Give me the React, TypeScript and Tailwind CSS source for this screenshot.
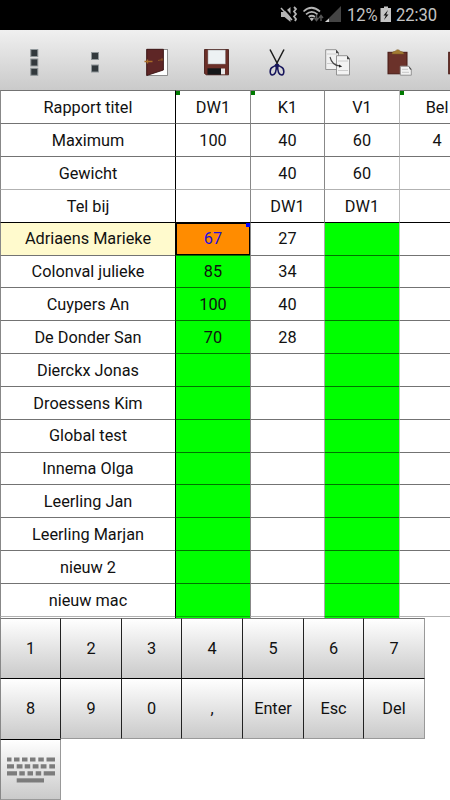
import clsx from 'clsx'
import { ReactNode } from 'react'

type TRow = {
  label: string
  values: string[]
}

const headerRows: TRow[] = [
  { label: 'Rapport titel', values: ['DW1', 'K1', 'V1', 'Bel'] },
  { label: 'Maximum', values: ['100', '40', '60', '4'] },
  { label: 'Gewicht', values: ['', '40', '60', ''] },
  { label: 'Tel bij', values: ['', 'DW1', 'DW1', ''] },
]

const studentRows: TRow[] = [
  { label: 'Adriaens Marieke', values: ['67', '27', '', ''] },
  { label: 'Colonval julieke', values: ['85', '34', '', ''] },
  { label: 'Cuypers An', values: ['100', '40', '', ''] },
  { label: 'De Donder San', values: ['70', '28', '', ''] },
  { label: 'Dierckx Jonas', values: ['', '', '', ''] },
  { label: 'Droessens Kim', values: ['', '', '', ''] },
  { label: 'Global test', values: ['', '', '', ''] },
  { label: 'Innema Olga', values: ['', '', '', ''] },
  { label: 'Leerling Jan', values: ['', '', '', ''] },
  { label: 'Leerling Marjan', values: ['', '', '', ''] },
  { label: 'nieuw 2', values: ['', '', '', ''] },
  { label: 'nieuw mac', values: ['', '', '', ''] },
  { label: '', values: ['', '', '', ''] },
]

const keys = ['1', '2', '3', '4', '5', '6', '7', '8', '9', '0', ',', 'Enter', 'Esc', 'Del']

function StatusBar() {
  return (
    <div className="flex h-[30px] shrink-0 items-center bg-black text-[#c4c4c4]">
      <svg className="ml-[270px] h-[30px] w-[75px] shrink-0" viewBox="270 0 75 30">
        {/* muted, vibrating */}
        <path d="M281 12h3.500l6-5v15l-6-5H281z" fill="#b4b4b4" />
        <path d="M282.500 6.500l10 11" stroke="#000" strokeWidth="2" />
        <path d="M281 8l11 12" stroke="#b4b4b4" strokeWidth="1.500" />
        <path d="M294 7l2 2-2 2.500 2 2.500-2 2.500 2 2.500-1 2" fill="none" stroke="#b4b4b4" strokeWidth="1.800" />
        {/* wifi */}
        <g fill="none" stroke="#b4b4b4" strokeWidth="1.700">
          <path d="M303.500 11.500q8-7.500 16.500 0" />
          <path d="M306 14.300q5.700-5 11.500 0" />
          <path d="M308.700 17q3-2.500 6.200 0" />
        </g>
        <path d="M309.500 18.500q2.300-1.500 4.500 0l-2.200 2.700z" fill="#b4b4b4" />
        <path d="M316.500 15v5M314.500 18l2 2.500 2-2.500M321 21v-5M319 18l2-2.500 2 2.500" fill="none" stroke="#555" strokeWidth="1.500" />
        {/* signal */}
        <path d="M341 6v16h-16z" fill="#444" />
        <path d="M329 18.500v3.500h-4z" fill="#d0d0d0" />
      </svg>
      <span className="ml-[2px] w-[30px] origin-left scale-x-[0.87] text-[19px] leading-[30px]">12%</span>
      <svg className="ml-[3px] h-[30px] w-[12px] shrink-0" viewBox="380 0 12 30">
        <path d="M384 6.500h4v1.500h3V22h-10.500V8h3.500z" fill="#c4c4c4" />
        <path d="M388 10l-4.500 5.500h2.300l-1.800 4.500 4.500-5.500h-2.300z" fill="#111" />
      </svg>
      <span className="ml-[4px] w-[42px] origin-left scale-x-[0.87] text-[19px] leading-[30px]">22:30</span>
    </div>
  )
}

function ToolIcon(props: Readonly<{ viewBox: string; children: ReactNode }>) {
  return (
    <svg className="h-[60px] w-[61px] shrink-0" viewBox={props.viewBox}>
      {props.children}
    </svg>
  )
}

function Toolbar() {
  return (
    <div className="flex h-[60px] shrink-0 overflow-hidden bg-linear-to-b from-[#f0f0f0] to-[#cacaca]">
      <ToolIcon viewBox="0 30 61 60">
        <g fill="#32393d" stroke="#8f9699" strokeWidth="1">
          <rect x="30.800" y="49.500" width="7" height="7" />
          <rect x="30.800" y="59" width="7" height="7" />
          <rect x="30.800" y="68.300" width="7" height="7" />
        </g>
      </ToolIcon>
      <ToolIcon viewBox="61 30 61 60">
        <g fill="#32393d" stroke="#8f9699" strokeWidth="1">
          <rect x="91.500" y="52.500" width="7" height="7" />
          <rect x="91.500" y="65" width="7" height="7" />
        </g>
      </ToolIcon>
      {/* door */}
      <ToolIcon viewBox="122 30 61 60">
        <rect x="147" y="49.500" width="20.500" height="26" fill="#fff" stroke="#777" strokeWidth=".8" />
        <path d="M146.700 49.300h16.700V70l-16.700 5.500z" fill="#5e2626" stroke="#381111" strokeWidth=".9" />
        <path d="M144.500 61.500h8M147.500 59.500v4" stroke="#a96c28" strokeWidth="1.300" />
        <path d="M158 60.500l4.500-1M162 58v3" stroke="#8b5524" strokeWidth="1" />
      </ToolIcon>
      {/* floppy */}
      <ToolIcon viewBox="183 30 61 60">
        <path d="M204.500 49.500h24v25.300H206l-1.500-1.500z" fill="#6b2f28" stroke="#4b201c" strokeWidth=".9" />
        <rect x="208" y="50" width="17.300" height="14" fill="#edf1f3" stroke="#999" strokeWidth=".5" />
        <rect x="207.500" y="68.300" width="13.500" height="6.300" fill="#151719" />
        <rect x="221" y="68.500" width="4" height="5.800" fill="#e9e9e9" />
      </ToolIcon>
      {/* scissors */}
      <ToolIcon viewBox="244 30 61 60">
        <path d="M270 49.500l7 13.500 1 4M284 49.500L277 63l-1 4" fill="none" stroke="#1b1b1b" strokeWidth="1.500" />
        <g fill="none" stroke="#17155c" strokeWidth="1.600">
          <path d="M276.300 64.500q.5 10-4 10.500c-3 0-2.800-7 .5-8 2-.5 3-1.500 3.500-3" />
          <path d="M277.700 64.500q-.5 10 4 10.500c3 0 2.800-7-.5-8-2-.5-3-1.500-3.500-3" />
        </g>
      </ToolIcon>
      {/* copy */}
      <ToolIcon viewBox="305 30 61 60">
        <path d="M325.700 49.700H336l2.500 3.300v16.500h-12.800z" fill="#f1f1f1" stroke="#8a8a8a" strokeWidth=".9" />
        <path d="M336 49.500v3.800h3z" fill="#444" />
        <path d="M327 54h10M327 63.500h9" stroke="#ccc" strokeWidth="1" />
        <path d="M336.500 55.700H347l2.500 3.300v16h-13z" fill="#f3f3f3" stroke="#8a8a8a" strokeWidth=".9" />
        <path d="M347 55.500v3.800h3z" fill="#444" />
        <path d="M338 61h10M338 70.500h10" stroke="#ccc" strokeWidth="1" />
        <path d="M330 57q2 8.500 10 9" fill="none" stroke="#444" strokeWidth="1.100" />
        <path d="M339 64.500l3.200 2-3.200 1z" fill="#222" />
      </ToolIcon>
      {/* paste */}
      <ToolIcon viewBox="366 30 61 60">
        <rect x="388" y="52.300" width="19" height="21.500" fill="#6b322a" stroke="#471a14" strokeWidth="1" />
        <path d="M392 54q0-2.500 3-2.700 2.800-3.300 5.500 0 3 .2 3.500 2.700z" fill="#a37b32" stroke="#7a5b24" strokeWidth=".5" />
        <path d="M400.300 66.200h8.500l2.500 3v6h-11z" fill="#f2f2f2" stroke="#8b8b8b" strokeWidth=".9" />
        <path d="M402 69.300h6M402 72.300h7" stroke="#bbb" strokeWidth=".8" />
        <path d="M408.500 66l3 3.500h-1.500z" fill="#222" />
      </ToolIcon>
      <ToolIcon viewBox="427 30 61 60">
        <rect x="448.700" y="52.300" width="19" height="21.500" fill="#6b322a" stroke="#471a14" strokeWidth="1" />
      </ToolIcon>
    </div>
  )
}

function SheetRow(props: Readonly<{ row: TRow; index: number }>) {
  const { row, index } = props
  const isStudent = index >= 4
  const isCurrent = index === 4
  const border = isCurrent
    ? 'border-t-black'
    : index === 3 || index === 16
      ? 'border-t-black/30'
      : 'border-t-black/55'

  return (
    <div className="grid h-[32.83px] shrink-0 grid-cols-[175px_75px_74px_75px_75px]">
      <div
        className={clsx(
          'flex items-center justify-center border-t border-l border-l-[#888] pt-[2px]',
          border,
          isCurrent ? 'bg-[#fffacd]' : 'bg-white'
        )}
      >
        {row.label}
      </div>
      {row.values.map((value, col) => (
        <div
          key={col}
          className={clsx(
            'relative flex items-center justify-center border-t border-l',
            border,
            col === 0 && 'border-l-black',
            col === 1 && 'border-l-[#888]',
            col === 2 && (isStudent ? 'border-l-[#aaa]' : 'border-l-[#888]'),
            col === 3 && 'border-l-[#bbb]',
            isStudent && (col === 0 || col === 2) ? 'bg-[#00ff00]' : 'bg-white',
            !(isCurrent && col === 0) && 'pt-[2px]'
          )}
        >
          {index === 0 && col !== 2 && (
            <span className="absolute top-0 left-0 size-[4px] bg-[#007a00]" />
          )}
          {isCurrent && col === 0 ? (
            <div className="relative flex h-full w-full items-center justify-center border border-black bg-[#ff8c00] pt-[2px] text-[#1f10dd]">
              {value}
              <span className="absolute -top-px -right-px size-[4px] bg-[#0000ff]" />
            </div>
          ) : (
            value
          )}
        </div>
      ))}
    </div>
  )
}

function KeyboardIcon() {
  return (
    <svg className="h-[28px] w-[50px]" viewBox="0 0 50 28" fill="#7c7c7c">
      <path d="M1 1.500h4.500v4H1zM8 1.500h5.500v4H8zM16 1.500h5.500v4H16zM24 1.500h5.500v4H24zM32.300 1.500h5.500v4h-5.500zM40.500 1.500H49v4h-8.500z" />
      <path d="M1 8.300h7v4.200H1zM10.700 8.300h5.800v4.200h-5.800zM18.700 8.300h5.500v4.200h-5.500zM26.700 8.300h5.800v4.200h-5.800zM34.700 8.300h5.800v4.200h-5.800zM43.300 8.300H49v4.200h-5.700z" />
      <path d="M1 15.200h10v4.200H1zM13.300 15.200h5.500v4.200h-5.500zM21.500 15.200H27v4.200h-5.500zM29.700 15.200h5.500v4.200h-5.500zM37.700 15.200H49v4.200H37.700z" />
      <path d="M10.700 22.300H38v4.200H10.700z" />
    </svg>
  )
}

function Key(props: Readonly<{ children: ReactNode; index: number }>) {
  const { children, index } = props
  return (
    <div
      className={clsx(
        'flex items-center justify-center border-t border-l bg-linear-to-b from-white to-[#cacaca] pt-[1px]',
        index < 7 ? 'border-t-[#777]' : 'border-t-black',
        index % 7 === 0 ? 'border-l-[#888]' : 'border-l-[#222]',
        (index % 7 === 6 || index === 14) && 'border-r border-r-[#999]',
        index > 7 && 'border-b border-b-[#999]'
      )}
    >
      {children}
    </div>
  )
}

export default function App() {
  return (
    <div className="flex h-[800px] w-[450px] flex-col overflow-hidden bg-white font-[Roboto,sans-serif] text-[16.3px] leading-none text-[#111]">
      <StatusBar />
      <Toolbar />
      <div className="h-[528px] shrink-0 overflow-hidden pt-[0.4px]">
        {[...headerRows, ...studentRows].map((row, index) => (
          <SheetRow key={index} row={row} index={index} />
        ))}
      </div>
      <div className="grid w-[425px] shrink-0 grid-cols-[60px_61px_60px_61px_61px_60px_62px] grid-rows-[60px_61px_61px]">
        {keys.map((key, index) => (
          <Key key={key} index={index}>
            {key}
          </Key>
        ))}
        <div className="col-span-2 grid grid-cols-[61px]">
          <Key index={14}>
            <KeyboardIcon />
          </Key>
        </div>
      </div>
    </div>
  )
}
